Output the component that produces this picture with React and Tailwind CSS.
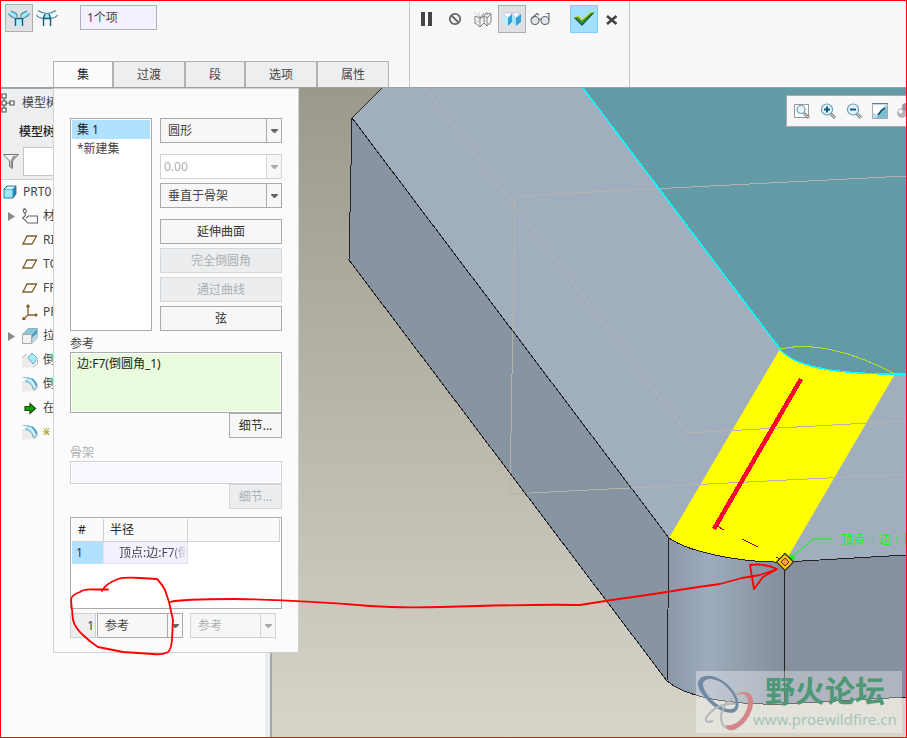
import { useState } from "react";

const TABS = ["集", "过渡", "段", "选项", "属性"];

const TREE = [
  { icon: "part", label: "PRT0", root: true },
  { icon: "material", label: "材", arrow: true },
  { icon: "plane", label: "RI" },
  { icon: "plane", label: "TO" },
  { icon: "plane", label: "FR" },
  { icon: "csys", label: "PR" },
  { icon: "extrude", label: "拉", arrow: true },
  { icon: "chamfer", label: "倒" },
  { icon: "round", label: "倒" },
  { icon: "insert", label: "在" },
  { icon: "round", label: "※", pending: true },
];

function RoundSetIcon() {
  return (
    <svg width="22" height="18" viewBox="0 0 22 18" fill="none">
      <path d="M1 4.500 3 2l6 2-1 4H3zM21 4.500 19 2l-6 2 1 4h5z" fill="#a5e6ff" />
      <path d="M7.500 10h7v7h-7z" fill="#b9ecff" />
      <path d="M.5 4.500Q2.500 8 7.500 9.500M21.500 4.500Q19.500 8 14.500 9.500M3 2l5 2.500 1 1V8M19 2l-5 2.500-1 1V8" stroke="#3f8aa5" strokeWidth="1.200" />
      <path d="M7.500 9v8M14.500 9v8M7.500 9.500h7" stroke="#14607c" strokeWidth="1.400" />
    </svg>
  );
}

function RoundTransitionIcon() {
  return (
    <svg width="22" height="18" viewBox="0 0 22 18" fill="none">
      <path d="M7.500 9 9 4.500h4L14.500 9z" fill="#a5e6ff" />
      <path d="M.5 6q2 3 7 3.500M21.500 6q-2 3-7 3.500M2 1.500Q6 4.500 11 4.500T20 1.500" stroke="#3f8aa5" strokeWidth="1.200" />
      <path d="M7.500 17V9L9 5M14.500 17V9L13 5M7.500 9.500h7" stroke="#14607c" strokeWidth="1.400" />
    </svg>
  );
}

function WireBoxIcon() {
  return (
    <svg width="20" height="17" viewBox="0 0 20 17" fill="none" stroke="#666" strokeWidth=".8">
      <path d="M2 5l5 2 4-5M2 5v7l5 4V7M7 7l4-2 3 2V15l-3-3V5M14 7l4-4-5-1-2 3M18 3v8l-4 4M7 16l4-4" />
      <path d="M1 1l17 13M18 1 1 13M6 1v12M14 1v5" strokeDasharray="1 1" stroke="#999" />
    </svg>
  );
}

function ShadedBoxIcon() {
  return (
    <svg width="20" height="16" viewBox="0 0 20 16">
      <path d="M1 2h9L6 7z" fill="#fff" stroke="#aab" strokeWidth=".5" />
      <path d="M1 3l5 4v8l-5-4z" fill="#bdefff" />
      <path d="M6 7l4-4v8l-4 4z" fill="#2fa4dc" />
      <path d="M10 2h8l-4 5z" fill="#fff" stroke="#aab" strokeWidth=".5" />
      <path d="M10 3l4 4v8l-4-4z" fill="#a6e4fb" />
      <path d="M14 7l5-4v8l-5 4z" fill="#2fa4dc" />
    </svg>
  );
}

function GlassesIcon() {
  return (
    <svg width="20" height="14" viewBox="0 0 20 14" stroke="#666" strokeWidth="1.100">
      <circle cx="5" cy="8.500" r="4" fill="#dfe5ea" />
      <circle cx="15" cy="8.500" r="4" fill="#dfe5ea" />
      <path d="M1.500 6.500 7 1.500l2 1.500M9 7.500q1-1 2 0M19 8V1.500h-2.500" fill="none" />
    </svg>
  );
}

function CheckIcon() {
  return (
    <svg width="20" height="16" viewBox="0 0 20 16">
      <path d="M1 7l3-1 4 4L17 2h2L8 14z" fill="#2f9a62" stroke="#1b5e2c" strokeWidth="1.400" />
      <path d="M1 6.500l3-1 4 4 9-8h2" fill="none" stroke="#c7e000" strokeWidth="1.200" />
    </svg>
  );
}

function TreeIcon({ name }) {
  if (name === "part")
    return (
      <svg width="14" height="14" viewBox="0 0 14 14" className="shrink-0">
        <path d="M1 4l3-3h9v8l-3 4H1z" fill="#2a8ec0" stroke="#23607c" strokeWidth=".8" />
        <path d="M1.500 4.500h8v8h-8z" fill="#9fe6fc" />
        <path d="M2 4l2.500-2.500H12L9.500 4z" fill="#d5f5ff" />
      </svg>
    );
  return (
    <svg width="16" height="16" viewBox="0 0 16 16" className="shrink-0" fill="none">
      {name === "material" && (
        <path d="M2.500.5q-2.500 2 0 4.500t-2 5q3 2 5 5h10V8H6.500L4 10M2.500.5q3 2 1 4.500" stroke="#666" strokeWidth="1.100" />
      )}
      {name === "plane" && <path d="M5 4h9.500L10 12H1z" stroke="#806028" strokeWidth="1.300" />}
      {name === "csys" && (
        <path d="M6 1v10h9M6 11l-5 4.500M4.500 3 6 1l1.500 2M13.500 9.500 15 11l-1.500 1.500M1 13v2.500h2.500" stroke="#806028" strokeWidth="1.300" />
      )}
      {name === "extrude" && (
        <>
          <path d="M1 6 6 .5h9.500L10 6z" fill="#8cc6db" />
          <path d="M15.500.5V10L10 15.500V6z" fill="#4f9dbd" />
          <path d="M10 6 15.500.5M10 15.500l5.500-5.500V5L10 10z" fill="#c9d6dc" stroke="#9fc4d2" strokeWidth=".6" />
          <path d="M1 6 6 .5h9.500" stroke="#8ab0c0" />
          <path d="M.5 6.500h9v9h-9z" fill="#f2f2f2" stroke="#aaa" />
        </>
      )}
      {name === "chamfer" && (
        <>
          <path d="M0 6 6 2l9 8-4 5.500H0z" fill="#ebebeb" />
          <path d="M0 5.500 5 2M11 15.500l4.500-4V8" stroke="#b5b5b5" />
          <path d="M6 6l4-5 5.500 5.500L11 12z" fill="#a9eaff" stroke="#5798b5" strokeWidth=".8" />
        </>
      )}
      {name === "round" && (
        <>
          <path d="M0 5h6q5 1 5 10.500H0z" fill="#ebebeb" />
          <path d="M11 15.500V11l4.500-1v3z" fill="#c4c4c4" />
          <path d="M3 5l3-3.500q8 0 9.500 9L11 13Q11 6 3 5z" fill="#a5def5" />
          <path d="M1 1.500q12-1 14.500 9" stroke="#87b8cb" />
          <path d="M3 5.500q7 .5 8 7.500" stroke="#6fa9c2" />
          <path d="M10 3q3.500 2.500 4.500 7" stroke="#3d9cc5" strokeWidth="1.500" />
          <path d="M7 4q4.500 1 5.500 7" stroke="#effbff" strokeWidth="1.500" />
        </>
      )}
      {name === "insert" && <path d="M3 6.500h5v-3l5.500 5-5.500 5v-3H3z" fill="#12a012" stroke="#194d00" strokeWidth="1.200" />}
    </svg>
  );
}

function ZoomIcon({ sign, framed }) {
  return (
    <svg width="18" height="18" viewBox="0 0 18 18" fill="none">
      {framed && <path d="M1.500 2.500h14v13h-14z" fill="#fff" stroke="#999" />}
      <path d="M11 11l5 5" stroke="#888" strokeWidth="3" />
      <path d="M11.500 11.500 16 16" stroke="#ddd" />
      <circle cx="8" cy="7.500" r={framed ? 4 : 5.500} fill="#e5f5fb" stroke="#6c9fb5" strokeWidth="1.200" />
      {sign && <path d={sign === "+" ? "M5 7.500h6M8 4.500v6" : "M5 7.500h6"} stroke="#105a80" strokeWidth="2" />}
    </svg>
  );
}

function ToolButton({ label, active, children }) {
  return (
    <button
      aria-label={label}
      className={`flex h-7 w-7 shrink-0 items-center justify-center ${active ? "border border-[#acaeb0] bg-[#dfe1e4]" : ""}`}
    >
      {children}
    </button>
  );
}

function Combo({ label, value, disabled, editable }) {
  return (
    <div
      className={`relative flex h-[25px] w-full border ${disabled ? "border-[#d0d2d4] text-[#adb0b2]" : "border-[#a8abad] text-[#444]"} ${
        editable ? "bg-white" : "bg-[#f7f7f7]"
      }`}
    >
      <select
        aria-label={label}
        disabled={disabled}
        className={`w-full appearance-none bg-transparent pr-4 opacity-100 outline-none ${editable ? "pl-[3px]" : "pl-[7px]"}`}
      >
        <option>{value}</option>
      </select>
      <span
        className={`pointer-events-none absolute inset-y-0 right-0 flex w-[15px] items-center justify-center border-l bg-[#f7f7f7] ${
          disabled ? "border-[#d0d2d4]" : "border-[#a8abad]"
        }`}
      >
        <svg width="7" height="4" viewBox="0 0 7 4">
          <path d="M0 0h7v1L4 4H3L0 1z" fill={disabled ? "#aaa" : "#666"} />
        </svg>
      </span>
    </div>
  );
}

function PushButton({ children, disabled }) {
  return (
    <button
      disabled={disabled}
      className={`h-[25px] w-full border text-center ${
        disabled ? "border-[#d5d8da] bg-[#ebedef] text-[#adb0b2]" : "border-[#a8abad] bg-[#f7f7f7] text-[#333]"
      }`}
    >
      {children}
    </button>
  );
}

function Header({ tab, setTab }) {
  return (
    <header className="flex h-[87px] shrink-0 border-b border-[#a0a0a0] bg-[#f8f8f8]">
      <div className="flex w-[409px] shrink-0 flex-col justify-between border-r border-[#c4c4c4]">
        <div className="flex items-start pl-1 pt-[3px]">
          <ToolButton label="集模式" active>
            <RoundSetIcon />
          </ToolButton>
          <ToolButton label="过渡模式">
            <RoundTransitionIcon />
          </ToolButton>
          <input
            aria-label="项"
            defaultValue="1个项"
            className="ml-[19px] mt-px h-[25px] w-[77px] border border-[#b0b2b4] bg-[#f4f0ff] px-[6px] pb-[2px] text-[#444] outline-none"
          />
        </div>
        <div role="tablist" className="flex pl-[52px]">
          {TABS.map((t) => (
            <button
              key={t}
              role="tab"
              aria-selected={t === tab}
              onClick={() => setTab(t)}
              className={`h-[26px] border border-b-0 border-[#b0b2b4] px-[23px] ${
                t === tab ? "bg-[#fbfbfb] text-[#222]" : "bg-[#eceef0] text-[#444]"
              }`}
            >
              {t}
            </button>
          ))}
        </div>
      </div>
      <div className="flex w-[220px] shrink-0 items-start border-r border-[#c4c4c4] pl-[3px] pt-1">
        <ToolButton label="暂停">
          <svg width="12" height="14" viewBox="0 0 12 14" fill="#444">
            <path d="M0 0h4v14H0zM7 0h4v14H7z" />
          </svg>
        </ToolButton>
        <ToolButton label="无预览">
          <svg width="14" height="14" viewBox="0 0 14 14" fill="none" stroke="#666" strokeWidth="1.800">
            <circle cx="7" cy="7" r="5.200" />
            <path d="M3.500 3.500l7 7" />
          </svg>
        </ToolButton>
        <ToolButton label="分离">
          <WireBoxIcon />
        </ToolButton>
        <div className="ml-px flex">
          <ToolButton label="连接" active>
            <ShadedBoxIcon />
          </ToolButton>
          <ToolButton label="特征预览">
            <GlassesIcon />
          </ToolButton>
        </div>
        <button aria-label="确定" className="ml-4 flex h-7 w-7 items-center justify-center border border-[#7ccdfb] bg-[#a3dfff]">
          <CheckIcon />
        </button>
        <ToolButton label="取消">
          <svg width="12" height="12" viewBox="0 0 12 12" fill="none" stroke="#444" strokeWidth="2.600">
            <path d="M1 3l9.500 8M10.500 3 1 11" />
          </svg>
        </ToolButton>
      </div>
    </header>
  );
}

function Sidebar() {
  return (
    <aside className="flex w-[271px] shrink-0 flex-col overflow-hidden border-r-2 border-t border-[#a5a8ab] bg-[#eceef0] text-[#444]">
      <div className="flex h-7 items-center gap-[7px]">
        <svg width="14" height="20" viewBox="0 0 14 20" fill="#fff" stroke="#555" strokeWidth="1.200">
          <path d="M3 5v10M3 10h7" />
          <path d="M1 1h4v4H1zM1 8h4v4H1zM1 15h4v4H1zM9 8h4v4H9z" />
        </svg>
        模型树
      </div>
      <div className="flex h-[30px] items-center pl-[18px] font-medium text-[#222]">模型树</div>
      <div className="flex h-[33px] items-start gap-1 border-b border-[#cfd2d4] pl-[2px]">
        <svg width="16" height="15" viewBox="0 0 16 15" className="mt-[7px]">
          <path d="M.5.500h15l-6 6.500v7.500l-3-2V7z" fill="#f4f4f4" stroke="#777" />
          <path d="M9 7l5-5.500-4 .5-2.500 5V13l1.500 1z" fill="#999" />
        </svg>
        <input aria-label="过滤" className="h-[29px] w-[230px] border border-[#c4c6c8] bg-white px-1 outline-none" />
      </div>
      <ul className="mr-[5px] flex-1 bg-[#fcfcfc]">
        {TREE.map((n, i) => (
          <li key={i} className={`flex h-6 items-center ${n.root ? "gap-[6px] pl-[2px]" : "gap-[5px] pl-[21px]"}`}>
            {n.arrow && (
              <svg width="7" height="9" viewBox="0 0 7 9" className="-ml-[14px] mr-[2px]">
                <path d="M0 0l7 4.500L0 9z" fill="#8a8a8a" />
              </svg>
            )}
            <TreeIcon name={n.icon} />
            <span className={n.pending ? "text-[8px] text-[#554400] [text-shadow:0_0_2px_#ff0]" : ""}>{n.label}</span>
          </li>
        ))}
      </ul>
    </aside>
  );
}

function SetPanel() {
  const [current, setCurrent] = useState(0);

  return (
    <section className="absolute left-[52px] top-0 flex w-[246px] flex-col border border-[#cfd2d4] bg-[#fbfbfb] px-4 pb-[14px] pt-[29px] text-[#444]">
      <div className="flex gap-2">
        <ul className="w-[82px] border border-[#a8abad] bg-white p-px">
          {["集 1", "*新建集"].map((s, i) => (
            <li key={s}>
              <button
                onClick={() => setCurrent(i)}
                className={`block h-[19px] w-full pl-[5px] text-left ${i === current ? "bg-[#b0e2ff] text-[#222]" : ""}`}
              >
                {s}
              </button>
            </li>
          ))}
        </ul>
        <div className="flex flex-1 flex-col gap-[11px]">
          <Combo label="截面形状" value="圆形" />
          <div className="flex flex-col gap-1">
            <Combo label="圆锥参数" value="0.00" disabled editable />
            <Combo label="创建方法" value="垂直于骨架" />
          </div>
          <div className="flex flex-col gap-1">
            <PushButton>延伸曲面</PushButton>
            <PushButton disabled>完全倒圆角</PushButton>
            <PushButton disabled>通过曲线</PushButton>
            <PushButton>弦</PushButton>
          </div>
        </div>
      </div>

      <label htmlFor="refs" className="mt-1 h-[17px] leading-[17px]">
        参考
      </label>
      <textarea
        id="refs"
        defaultValue="边:F7(倒圆角_1)"
        className="block h-[61px] resize-none border border-[#a8abad] bg-[#eafbdd] px-[6px] py-[3px] text-[#222] shadow-[inset_0_0_0_1px_#fff] outline-none"
      />
      <div className="w-[53px] self-end">
        <PushButton>细节...</PushButton>
      </div>

      <label htmlFor="spine" className="mt-[6px] h-[17px] leading-[17px] text-[#adb0b2]">
        骨架
      </label>
      <input
        id="spine"
        disabled
        className="h-[23px] border border-[#cfd2d4] bg-[#f9f7ff] px-1 shadow-[inset_0_0_0_1px_#fff]"
      />
      <div className="w-[53px] self-end">
        <PushButton disabled>细节...</PushButton>
      </div>

      {/* radius table */}
      <div className="mt-2 h-[92px] border border-[#a8abad] bg-white p-px">
        <table className="w-[208px] table-fixed border-separate border-spacing-0 text-left">
          <thead>
            <tr className="h-[23px] bg-[#fafafa] text-[#222]">
              <th className="w-8 border-b border-r border-[#d0d2d4] p-0 pl-[6px] font-normal">#</th>
              <th className="w-[84px] border-b border-r border-[#d0d2d4] p-0 pl-[6px] font-normal">半径</th>
              <th className="border-b border-r border-[#d0d2d4] p-0" />
            </tr>
          </thead>
          <tbody>
            <tr className="h-[22px]">
              <td className="border-r border-[#e4e0ee] bg-[#b0e2ff] p-0 pl-1 text-[#333]">1</td>
              <td className="border-b border-r border-[#e4e0ee] bg-[#f4f0ff] p-0 pl-[15px]">
                <div className="overflow-hidden whitespace-nowrap [mask-image:linear-gradient(to_right,black_75%,transparent)]">
                  顶点:边:F7(倒
                </div>
              </td>
              <td className="p-0" />
            </tr>
          </tbody>
        </table>
      </div>

      <div className="mt-1 flex">
        <input
          aria-label="编号"
          readOnly
          value="1"
          className="mr-px h-[25px] w-[26px] border border-[#cfd2d4] bg-[#eceef0] pr-px text-right outline-none"
        />
        <div className="mr-[7px] w-[86px]">
          <Combo label="半径参考" value="参考" />
        </div>
        <div className="w-[86px]">
          <Combo label="半径参考 2" value="参考" disabled />
        </div>
      </div>
    </section>
  );
}

function Model() {
  return (
    <svg className="absolute inset-0 h-full w-full" viewBox="272 88 634 649" preserveAspectRatio="xMinYMin slice" fill="none">
      <defs>
        <linearGradient id="cyl">
          <stop offset="0" stopColor="#8b97a7" />
          <stop offset=".35" stopColor="#9dabbc" />
          <stop offset="1" stopColor="#838e9c" />
        </linearGradient>
      </defs>
      <path d="M352 118 669 538 667 681 349 260z" fill="#8994a2" />
      <path d="M382 88 352 118 669 538 785 562 906 555V88z" fill="#a1aebe" />
      <path d="M583 88 780 349C790 362 820 374 895 374H906V88z" fill="#629aa6" />
      <path d="M669 538C690 553 745 563 785 562L784 704C740 705 690 700 667 681z" fill="url(#cyl)" />
      <path d="M785 562 906 555V697L784 704z" fill="#86909e" />
      <path d="M780 349C790 362 820 374 895 374L785 562C745 563 690 553 669 538z" fill="#ff0" />

      <g shapeRendering="crispEdges">
        <path d="M425 88 687 433 906 421M906 176 515 196 510 494 906 474" stroke="#b4b3b0" />
        <path
          d="M382 88 352 118 349 260 667 681C690 700 740 705 784 704L906 697M352 118 669 538 667 681M669 538C690 553 745 563 785 562L784 704M785 562 906 555"
          stroke="#222"
        />
        <path d="M583 88 780 349C790 362 820 374 895 374H906" stroke="#0ff" strokeWidth="1.500" />
        <path d="M780 349C810 342 850 350 895 374" stroke="#b7df33" />
        <path d="M714 529 801 379" stroke="#ff0033" strokeWidth="4.500" />
        <path d="M717 526 724 530M742 539 758 547M776 557 781 560" stroke="#900020" />
      </g>

      {/* vertex handle and its callout */}
      <path d="M790 559 813 539H833" stroke="#0f0" />
      <path d="M787 561 791 554 796 559z" fill="#0f0" />
      <path d="M785 553.500 793.500 562 785 570.500 776.500 562z" fill="#f5c800" stroke="#443c20" strokeWidth="1.400" />
      <path d="M785 558 789 562 785 566 781 562z" fill="#ff9d20" stroke="#443c20" />
      <text y="544" fontSize="12" fill="#0f0">
        <tspan x="841">顶点</tspan>
        <tspan x="870">:</tspan>
        <tspan x="879">边</tspan>
        <tspan x="895">:</tspan>
      </text>
      <path d="M905.500 534v11" stroke="#0f0" />
    </svg>
  );
}

function ViewToolbar() {
  return (
    <div className="absolute right-0 top-[7px] flex h-8 w-[120px] items-center overflow-hidden border border-r-0 border-[#aaa] bg-[#f8f8f8] pl-[2px]">
      <button aria-label="重新调整" className="flex w-[26px] shrink-0 justify-center">
        <ZoomIcon framed />
      </button>
      <button aria-label="放大" className="flex w-[26px] shrink-0 justify-center">
        <ZoomIcon sign="+" />
      </button>
      <button aria-label="缩小" className="flex w-[26px] shrink-0 justify-center">
        <ZoomIcon sign="-" />
      </button>
      <button aria-label="重画" className="flex w-[26px] shrink-0 justify-center">
        <svg width="16" height="16" viewBox="0 0 16 16">
          <path d="M.5.500h15v15H.5z" fill="#b5deeb" stroke="#aaa" />
          <path d="M1 2h13Q8 6 6 12L1 10z" fill="#fff" />
          <path d="M15 3v12H4z" fill="#7cbdd2" />
          <path d="M13 5Q9 7 6 12" stroke="#14506c" strokeWidth="1.600" fill="none" />
          <path d="M0 .5h16" stroke="#777" />
        </svg>
      </button>
      <button aria-label="显示样式" className="flex w-[26px] shrink-0 justify-center">
        <svg width="20" height="16" viewBox="0 0 20 16">
          <circle cx="6" cy="10" r="5" fill="#b5b5b5" />
          <circle cx="4.500" cy="8.500" r="2" fill="#fff" />
          <circle cx="10" cy="4" r="4" fill="#999" />
        </svg>
      </button>
    </div>
  );
}

function Watermark() {
  return (
    <div className="absolute bottom-1 right-1 flex h-[62px] w-[206px] items-center bg-white/35">
      <svg width="57" height="60" viewBox="0 0 57 60" fill="none" className="shrink-0">
        <path
          fillRule="evenodd"
          d="M2 12C2 2 16 1 27 9 39 17 46 31 41 38 36 45 20 38 11 28 5 21 2 16 2 12zM7 12C7 17 11 23 17 29 25 36 35 40 39 35 42 30 36 18 26 11 17 5 8 6 7 12z"
          fill="#6f89a6"
        />
        <path
          fillRule="evenodd"
          d="M36 25C45 18 56 18 57 28 58 40 48 55 37 58 32 59 29 56 30 53 42 55 52 41 52 30 52 21 45 20 36 25z"
          fill="#d3868a"
        />
        <path d="M36 26q-10 8-11 18 0 10 6 12M40 32q-18-2-29 12-4 8 6 5" stroke="#b3b8b9" strokeWidth="2" />
      </svg>
      <div className="flex flex-col whitespace-nowrap">
        <span className="pl-[12px] text-[30px] font-bold leading-[34px] text-[#4f9877]">野火论坛</span>
        <a href="#" className="text-[15px] leading-[22px] text-[#a5c5b8]">
          www.proewildfire.cn
        </a>
      </div>
    </div>
  );
}

function Markup() {
  return (
    <svg
      className="pointer-events-none absolute inset-0 h-full w-full"
      viewBox="1 1 905 736"
      preserveAspectRatio="xMinYMin slice"
      fill="none"
      stroke="#f00"
      strokeWidth="1.800"
      strokeLinejoin="round"
      strokeLinecap="round"
    >
      <path d="M102 591Q105 584 118 579 124 577 140 578L157 579Q162 584 165 590L169 602 173 620 172 640Q171 650 168 652 163 655 153 654L123 652 98 647Q90 642 83 635 75 628 73 620L71 600Q71 595 80 592 84 589 93 589.500H108" />
      <path d="M170 602Q180 599 235 599 300 600 370 606 400 608 440 607 540 604 580 605 610 600 640 596L667 592Q690 588 720 584L742 578 760 575 775 570" />
      <path d="M750 565Q765 563 777 569L763 577 754 589 750 565" />
    </svg>
  );
}

export default function App() {
  const [tab, setTab] = useState("集");

  return (
    <div className="relative flex min-h-screen flex-col overflow-hidden border border-[#f00] font-['Noto_Sans','Noto_Sans_CJK_SC',sans-serif] text-[12px] leading-4">
      <Header tab={tab} setTab={setTab} />
      <div className="relative flex flex-1">
        <Sidebar />
        <main className="relative flex-1 overflow-hidden bg-linear-to-b from-[#9b998b] to-[#d7d5ca]">
          <Model />
          <ViewToolbar />
          <Watermark />
        </main>
        <SetPanel />
      </div>
      <Markup />
    </div>
  );
}
